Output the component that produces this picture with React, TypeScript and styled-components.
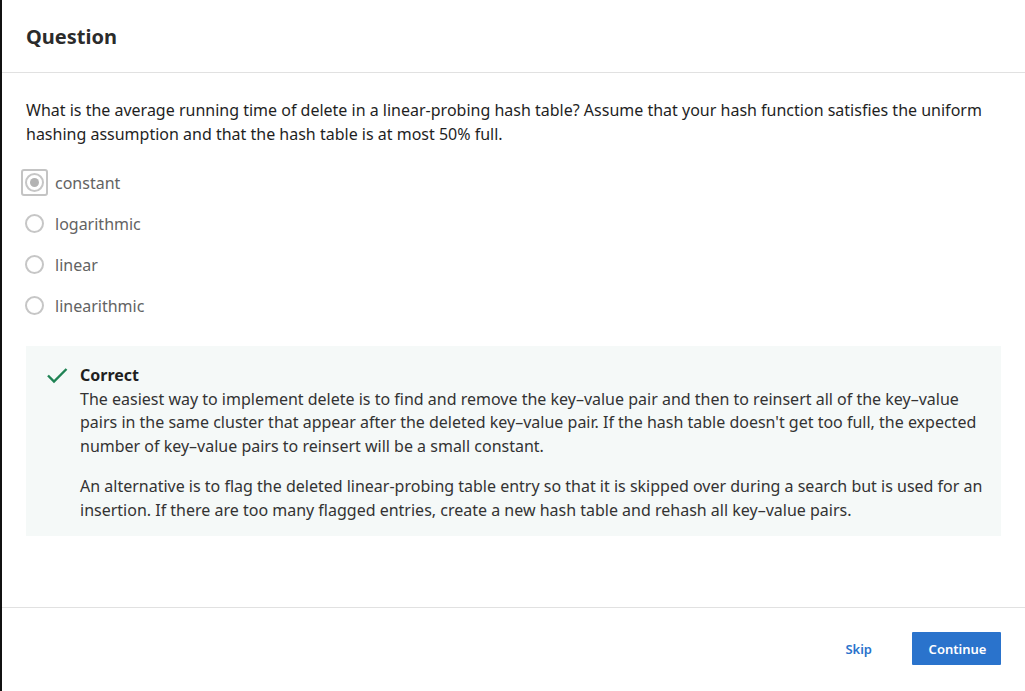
import React from "react";
import styled, { createGlobalStyle } from "styled-components";

const Global = createGlobalStyle`
  html, body { margin: 0; padding: 0; background: #fff; }
  body { font-family: "Noto Sans", "Open Sans", sans-serif; color: #1f1f1f; }
  * { box-sizing: border-box; }
`;

const Page = styled.div`
  width: 1025px;
  height: 691px;
  border-left: 2px solid #111;
  display: flex;
  flex-direction: column;
  background: #fff;
`;

const Header = styled.header`
  height: 73px;
  padding: 2px 24px 0 24px;
  display: flex;
  align-items: center;
  border-bottom: 1px solid #e1e1e1;
`;

const Title = styled.h2`
  margin: 0;
  font-size: 20px;
  font-weight: 700;
  color: #2b2b2b;
  line-height: 1;
`;

const Body = styled.main`
  flex: 1;
  padding: 25px 24px 0 24px;
`;

const Prompt = styled.p`
  margin: 0 0 16px 0;
  font-size: 16px;
  line-height: 24px;
  color: #1f1f1f;
`;

const Options = styled.div`
  display: flex;
  flex-direction: column;
`;

const Option = styled.label`
  height: 41px;
  display: flex;
  align-items: center;
  gap: 7px;
  font-size: 16px;
  color: #636363;
`;

const RadioWrap = styled.span<{ $focused?: boolean }>`
  width: 27px;
  height: 27px;
  margin-left: -5px;
  border-radius: 3px;
  border: 2px solid ${(p) => (p.$focused ? "#c4c4c4" : "transparent")};
  display: flex;
  align-items: center;
  justify-content: center;
`;

const Radio = styled.span<{ $checked?: boolean }>`
  width: 19px;
  height: 19px;
  border-radius: 50%;
  border: 2px solid #c6c6c6;
  display: flex;
  align-items: center;
  justify-content: center;
  &::after {
    content: "";
    display: ${(p) => (p.$checked ? "block" : "none")};
    width: 9px;
    height: 9px;
    border-radius: 50%;
    background: #b3b3b3;
  }
`;

const Feedback = styled.section`
  margin-top: 20px;
  background: #f5f9f8;
  padding: 18px 16px 14px 20px;
  display: flex;
  gap: 12px;
`;

const IconBox = styled.div`
  width: 22px;
  flex: none;
  padding-top: 2px;
`;

const FeedbackText = styled.div`
  font-size: 16px;
  line-height: 23.7px;
  color: #333;
`;

const FeedbackTitle = styled.div`
  font-weight: 700;
  color: #1f1f1f;
`;

const Para = styled.p`
  margin: 0 0 16px 0;
  &:last-child { margin-bottom: 0; }
`;

const Footer = styled.footer`
  height: 84px;
  border-top: 1px solid #e1e1e1;
  display: flex;
  align-items: center;
  justify-content: flex-end;
  padding: 0 24px 2px 0;
  gap: 20px;
`;

const LinkButton = styled.button`
  background: none;
  border: none;
  font-family: inherit;
  font-size: 13px;
  font-weight: 600;
  color: #2a73cc;
  padding: 0 20px;
  height: 33px;
  cursor: pointer;
`;

const PrimaryButton = styled.button`
  background: #2a73cc;
  border: none;
  border-radius: 1px;
  font-family: inherit;
  font-size: 13px;
  font-weight: 600;
  color: #fff;
  width: 89px;
  height: 33px;
  padding: 0 0 0 2px;
  cursor: pointer;
`;

const options = ["constant", "logarithmic", "linear", "linearithmic"];

export default function App() {
  return (
    <>
      <Global />
      <Page>
        <Header>
          <Title>Question</Title>
        </Header>
        <Body>
          <Prompt>
            What is the average running time of delete in a linear-probing hash table? Assume that your hash function
            satisfies the uniform hashing assumption and that the hash table is at most 50% full.
          </Prompt>
          <Options>
            {options.map((o, i) => (
              <Option key={o}>
                <RadioWrap $focused={i === 0}>
                  <Radio $checked={i === 0} />
                </RadioWrap>
                {o}
              </Option>
            ))}
          </Options>
          <Feedback>
            <IconBox>
              <svg width="22" height="18" viewBox="0 0 22 18" fill="none">
                <path d="M2 9.5 L8 15.5 L20.5 3" stroke="#1f8354" strokeWidth="2.4" strokeLinecap="butt" strokeLinejoin="miter" />
              </svg>
            </IconBox>
            <FeedbackText>
              <FeedbackTitle>Correct</FeedbackTitle>
              <Para>
                The easiest way to implement delete is to find and remove the key–value pair and then to reinsert all of
                the key–value pairs in the same cluster that appear after the deleted key–value pair. If the hash table
                doesn't get too full, the expected number of key–value pairs to reinsert will be a small constant.
              </Para>
              <Para>
                An alternative is to flag the deleted linear-probing table entry so that it is skipped over during a
                search but is used for an insertion. If there are too many flagged entries, create a new hash table and
                rehash all key–value pairs.
              </Para>
            </FeedbackText>
          </Feedback>
        </Body>
        <Footer>
          <LinkButton>Skip</LinkButton>
          <PrimaryButton>Continue</PrimaryButton>
        </Footer>
      </Page>
    </>
  );
}
